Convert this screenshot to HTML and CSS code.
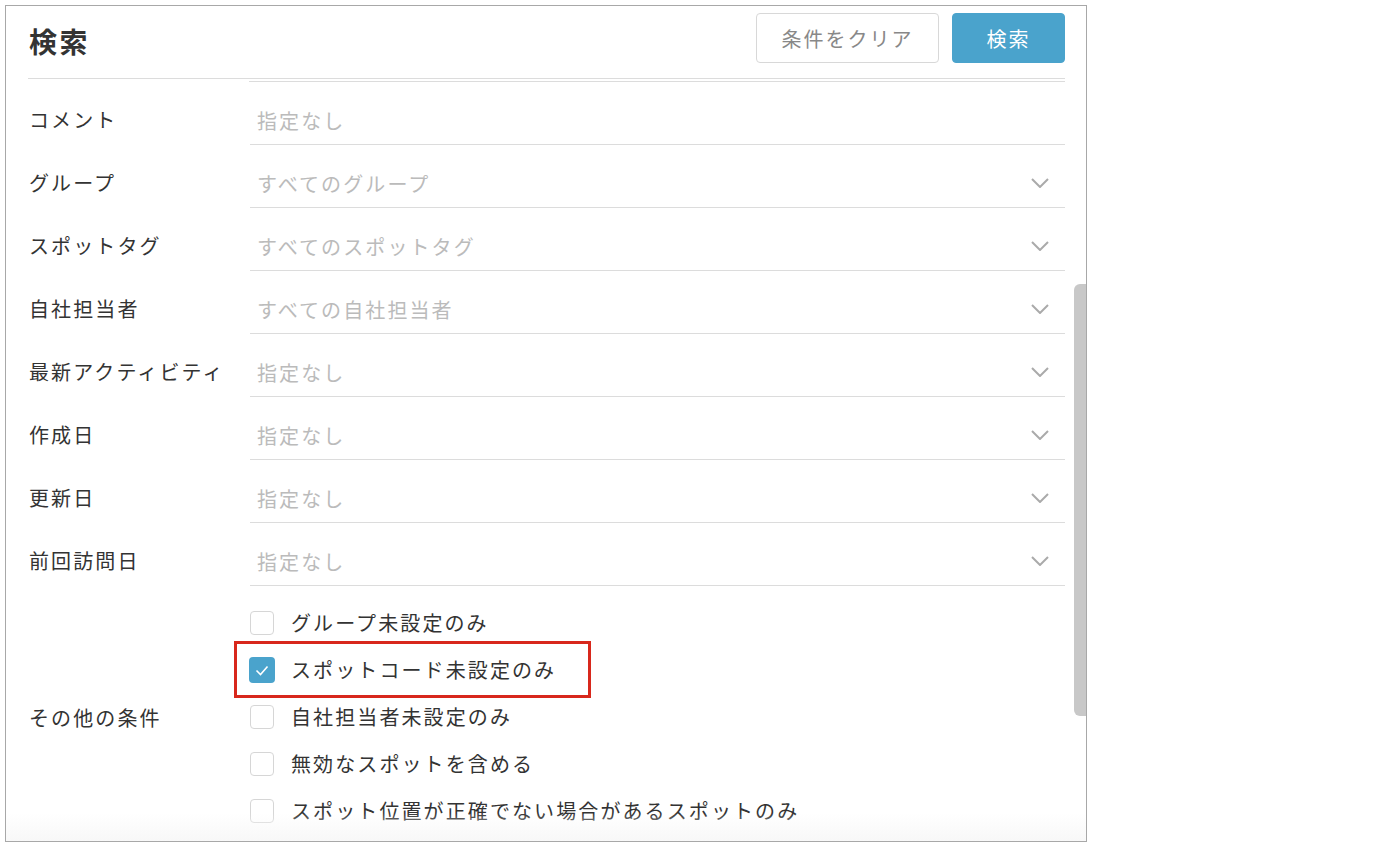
FILE: index.html
```html
<!DOCTYPE html>
<html lang="ja">
<head>
    <meta charset="UTF-8">
    <title>検索</title>
    <link rel="stylesheet" href="styles.css">
</head>
<body>
<div class="panel">
    <div class="header">
        <h1 class="title">検索</h1>
        <div class="actions">
            <button class="btn btn-clear">条件をクリア</button>
            <button class="btn btn-search">検索</button>
        </div>
    </div>

    <div class="scroll">
        <div class="field-stub"></div>

        <div class="row">
            <div class="label">コメント</div>
            <div class="field"><span class="placeholder">指定なし</span></div>
        </div>
        <div class="row">
            <div class="label">グループ</div>
            <div class="field select"><span class="placeholder">すべてのグループ</span>
                <svg class="chevron" viewBox="0 0 18 10"><path d="M1 1 L9 9 L17 1"/></svg></div>
        </div>
        <div class="row">
            <div class="label">スポットタグ</div>
            <div class="field select"><span class="placeholder">すべてのスポットタグ</span>
                <svg class="chevron" viewBox="0 0 18 10"><path d="M1 1 L9 9 L17 1"/></svg></div>
        </div>
        <div class="row">
            <div class="label">自社担当者</div>
            <div class="field select"><span class="placeholder">すべての自社担当者</span>
                <svg class="chevron" viewBox="0 0 18 10"><path d="M1 1 L9 9 L17 1"/></svg></div>
        </div>
        <div class="row">
            <div class="label">最新アクティビティ</div>
            <div class="field select"><span class="placeholder">指定なし</span>
                <svg class="chevron" viewBox="0 0 18 10"><path d="M1 1 L9 9 L17 1"/></svg></div>
        </div>
        <div class="row">
            <div class="label">作成日</div>
            <div class="field select"><span class="placeholder">指定なし</span>
                <svg class="chevron" viewBox="0 0 18 10"><path d="M1 1 L9 9 L17 1"/></svg></div>
        </div>
        <div class="row">
            <div class="label">更新日</div>
            <div class="field select"><span class="placeholder">指定なし</span>
                <svg class="chevron" viewBox="0 0 18 10"><path d="M1 1 L9 9 L17 1"/></svg></div>
        </div>
        <div class="row">
            <div class="label">前回訪問日</div>
            <div class="field select"><span class="placeholder">指定なし</span>
                <svg class="chevron" viewBox="0 0 18 10"><path d="M1 1 L9 9 L17 1"/></svg></div>
        </div>

        <div class="other">
            <div class="label">その他の条件</div>
            <div class="checks">
                <label class="check"><span class="box"></span>グループ未設定のみ</label>
                <label class="check highlighted"><span class="box checked"><svg viewBox="0 0 26 26"><path d="M7.5 13.5 L11.5 17.5 L18.5 9.5"/></svg></span>スポットコード未設定のみ</label>
                <label class="check"><span class="box"></span>自社担当者未設定のみ</label>
                <label class="check"><span class="box"></span>無効なスポットを含める</label>
                <label class="check"><span class="box"></span>スポット位置が正確でない場合があるスポットのみ</label>
            </div>
        </div>

        <div class="scrollbar"></div>
        <div class="fade"></div>
    </div>
</div>
</body>
</html>
```

FILE: styles.css
```css
body {
    margin: 0;
    padding: 0;
    background: white;
    font-family: "Noto Sans CJK JP", "Noto Sans", sans-serif;
    color: #333;
}

.panel {
    width: 1080px;
    height: 835px;
    margin: 5px 0 0 5px;
    border: 1px solid #a8a8a8;
    display: flex;
    flex-direction: column;
    overflow: hidden;
}

.header {
    margin: 0 21px 0 22px;
    height: 72px;
    flex-shrink: 0;
    display: flex;
    justify-content: space-between;
    align-items: flex-start;
    border-bottom: 1px solid #dcdcdc;
}

.title {
    margin: 15px 0 0 1px;
    font-size: 28px;
    line-height: 40px;
    font-weight: bold;
    letter-spacing: 2.5px;
    color: #333;
}

.actions {
    display: flex;
    gap: 13px;
    margin-top: 7px;
}

.btn {
    height: 50px;
    border-radius: 4px;
    font-family: inherit;
    font-size: 20px;
    letter-spacing: 2px;
    cursor: pointer;
}

.btn-clear {
    width: 183px;
    background: white;
    border: 1px solid #d8d8d8;
    color: #888;
}

.btn-search {
    width: 113px;
    background: #4aa3cc;
    border: 1px solid #4aa3cc;
    color: white;
}

.scroll {
    position: relative;
    flex: 1;
    padding: 0 21px 0 22px;
    overflow: hidden;
}

.field-stub {
    margin-left: 221px;
    height: 2px;
    border-bottom: 1px solid #dcdcdc;
}

.row {
    display: flex;
    align-items: flex-end;
}

.label {
    width: 221px;
    flex-shrink: 0;
    padding-left: 1px;
    padding-top: 2px;
    font-size: 20px;
    letter-spacing: 2.1px;
    line-height: 48px;
    margin-bottom: 1px;
    white-space: nowrap;
}

.field {
    flex: 1;
    height: 50px;
    margin-top: 12px;
    padding: 0 16px 0 7px;
    border-bottom: 1px solid #dcdcdc;
    display: flex;
    align-items: center;
    justify-content: space-between;
}

.placeholder {
    padding-top: 2px;
    font-size: 20px;
    letter-spacing: 2.1px;
    color: #bbb;
}

.chevron {
    width: 18px;
    height: 10px;
    margin-top: 2px;
}

.chevron path {
    fill: none;
    stroke: #aaa;
    stroke-width: 2;
}

.other {
    display: flex;
    align-items: center;
    margin-top: 13px;
}

.other .label {
    margin-bottom: 0;
}

.checks {
    display: flex;
    flex-direction: column;
}

.check {
    position: relative;
    height: 47px;
    display: flex;
    align-items: center;
    font-size: 20px;
    letter-spacing: 2.1px;
    color: #333;
}

.box {
    width: 24px;
    height: 24px;
    margin-right: 17px;
    box-sizing: border-box;
    border: 1px solid #d6d6d6;
    border-radius: 4px;
    background: white;
}

.box.checked {
    width: 26px;
    height: 26px;
    margin-right: 16px;
    margin-left: -1px;
    border: none;
    background: #4aa3cc;
}

.box svg {
    display: block;
    width: 26px;
    height: 26px;
}

.box svg path {
    fill: none;
    stroke: white;
    stroke-width: 1.6;
}

.highlighted::after {
    content: "";
    position: absolute;
    left: -16px;
    top: -5px;
    width: 357px;
    height: 57px;
    box-sizing: border-box;
    border: 3px solid #d8281c;
}

.scrollbar {
    position: absolute;
    top: 205px;
    right: 0;
    width: 12px;
    height: 432px;
    border-radius: 6px 0 0 6px;
    background: #c8c8c8;
}

.fade {
    position: absolute;
    left: 0;
    right: 0;
    bottom: 0;
    height: 28px;
    background: linear-gradient(to bottom, rgba(250, 250, 250, 0), #f8f8f8);
    pointer-events: none;
}
```
